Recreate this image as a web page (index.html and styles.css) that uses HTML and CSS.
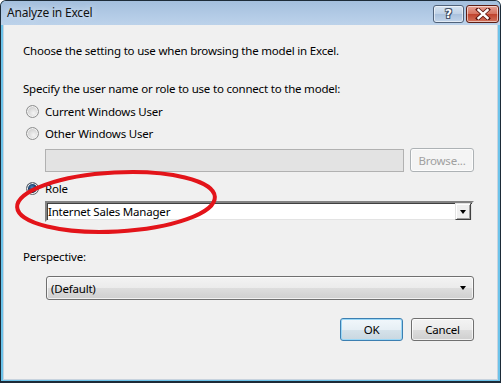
FILE: index.html
```html
<!DOCTYPE html>
<html>
  <head>
    <meta charset="UTF-8" />
    <title>Analyze in Excel</title>
    <link rel="stylesheet" href="styles.css">
  </head>
  <body>
    <div class="window">
      <div class="titlebar">
        <span class="title">Analyze in Excel</span>
        <div class="caption-buttons">
          <div class="cap help">?</div>
          <div class="cap close">
            <svg width="16" height="12" viewBox="0 0 16 12">
              <path d="M3 1.5 L13 10.5 M13 1.5 L3 10.5" stroke="#5a1410" stroke-width="4" stroke-linecap="square" />
              <path d="M3.5 2 L12.5 10 M12.5 2 L3.5 10" stroke="#fff" stroke-width="2.4" stroke-linecap="square" />
            </svg>
          </div>
        </div>
      </div>
      <div class="client">
        <p class="intro">Choose the setting to use when browsing the model in Excel.</p>
        <p class="label spec">Specify the user name or role to use to connect to the model:</p>

        <div class="radio-row first">
          <span class="radio"></span>
          <span>Current Windows User</span>
        </div>
        <div class="radio-row">
          <span class="radio"></span>
          <span>Other Windows User</span>
        </div>

        <div class="user-row">
          <div class="textbox disabled"></div>
          <div class="btn browse">Browse...</div>
        </div>

        <div class="radio-row role">
          <span class="radio checked"></span>
          <span>Role</span>
        </div>

        <div class="combo classic">
          <span class="combo-text">Internet Sales Manager</span>
          <span class="drop-btn"><span class="arrow"></span></span>
        </div>

        <p class="label perspective">Perspective:</p>
        <div class="combo modern">
          <span class="combo-text">(Default)</span>
          <span class="arrow"></span>
        </div>

        <div class="actions">
          <div class="btn default">OK</div>
          <div class="btn">Cancel</div>
        </div>

        <!-- annotation drawn over the role selector -->
        <svg class="callout" width="230" height="80" viewBox="0 0 230 80">
          <ellipse cx="115" cy="40" rx="99" ry="29.5" fill="none" stroke="#e3141a" stroke-width="4" transform="rotate(-3 115 40)" />
        </svg>
      </div>
    </div>
  </body>
</html>
```

FILE: styles.css
```css
html,
body {
  margin: 0;
  padding: 0;
  background: #fff;
}

body {
  font-family: "Noto Sans", "Open Sans", sans-serif;
  font-size: 11.5px;
  letter-spacing: -0.2px;
  color: #000;
}

.window {
  width: 501px;
  height: 383px;
  box-sizing: border-box;
  border: 1px solid #1d2b38;
  border-bottom-width: 2px;
  border-top-left-radius: 6px;
  border-top-right-radius: 6px;
  background: #6cc3ea;
  display: flex;
  flex-direction: column;
  overflow: hidden;
}

.titlebar {
  height: 24px;
  flex: none;
  display: flex;
  align-items: center;
  justify-content: space-between;
  padding: 0 1px 0 6px;
  background: linear-gradient(#a4bfdd, #b3cbe6 60%, #bcd2ea);
}

.title {
  font-size: 12px;
  color: #111;
  padding-bottom: 1px;
  text-shadow: 0 0 6px #e6eef8;
}

.caption-buttons {
  display: flex;
  gap: 2px;
  align-self: flex-start;
  margin-top: 4px;
}

.cap {
  height: 16px;
  border: 1px solid #50627a;
  border-radius: 3px;
  display: flex;
  align-items: center;
  justify-content: center;
  box-shadow: inset 0 0 0 1px rgba(255, 255, 255, 0.55);
}

.help {
  width: 29px;
  background: linear-gradient(#d6e3f1, #bfd1e6 50%, #a9c0dc 51%, #c2d5ea);
  font-family: "DejaVu Sans", sans-serif;
  font-weight: bold;
  font-size: 12px;
  color: #fff;
  text-shadow: 0 0 1px #334, 1px 1px 0 #45566c, -1px -1px 0 #45566c, 1px -1px 0 #45566c, -1px 1px 0 #45566c;
}

.close {
  width: 31px;
  border-color: #5c1d14;
  background: linear-gradient(#e6a194, #d5725f 50%, #c0422d 51%, #d2735c);
}

.client {
  flex: 1;
  position: relative;
  margin: 0 2px 1px 2px;
  border: 1px solid #c8d3de;
  border-top: none;
  background: #f0f0f0;
  padding: 0 23px 0 19px;
}

p {
  margin: 0;
  line-height: 16px;
}

.intro {
  margin-top: 18px;
}

.spec {
  margin-top: 22px;
}

.radio-row {
  display: flex;
  align-items: center;
  height: 16px;
  margin-top: 6px;
  gap: 6px;
}

.radio {
  width: 11px;
  height: 11px;
  margin-left: 3px;
  border-radius: 50%;
  border: 1px solid #8e8f8f;
  background: radial-gradient(circle at 60% 65%, #f4f4f4, #cfcfcf 70%, #bdbdbd);
  box-shadow: inset 0 0 0 1px #f3f3f3;
}

.radio.checked {
  border-color: #5e636a;
  background: radial-gradient(circle at 45% 40%, #4d86bd, #173f6c 40%, #0a2342 58%, #c9c9c9 66%, #b4b4b4);
}

.user-row {
  display: flex;
  gap: 6px;
  margin: 7px 0 0 22px;
  height: 24px;
}

.textbox {
  flex: 1;
  box-sizing: border-box;
  height: 23px;
  margin-top: 1px;
}

.textbox.disabled {
  border: 1px solid #b1b1b1;
  background: #e3e3e3;
}

.btn {
  box-sizing: border-box;
  width: 63px;
  height: 23px;
  border: 1px solid #707070;
  border-radius: 3px;
  background: linear-gradient(#f3f3f3, #ebebeb 50%, #dddddd 51%, #cfcfcf);
  box-shadow: inset 0 0 0 1px rgba(255, 255, 255, 0.7);
  display: flex;
  align-items: center;
  justify-content: center;
}

.btn.browse {
  width: 64px;
  height: 24px;
  border-color: #adb2b5;
  background: #f4f4f4;
  color: #a0a0a0;
}

.btn.default {
  border-color: #3c7fb1;
  box-shadow: inset 0 0 0 1px #9ad7f6;
  background: linear-gradient(#f1f7fb, #e6eff5 50%, #d5e2ea 51%, #c9d7e0);
}

.role {
  margin-top: 8px;
}

.combo {
  box-sizing: border-box;
  display: flex;
  align-items: center;
}

.combo.classic {
  margin: 5px 0 0 22px;
  height: 21px;
  background: #fff;
  border-style: solid;
  border-width: 2px;
  border-color: #828282 #f0f0f0 #f0f0f0 #828282;
  box-shadow: inset 1px 1px 0 #404040, inset -1px -1px 0 #e3e3e3;
}

.combo-text {
  flex: 1;
  padding-left: 1px;
  white-space: nowrap;
}

.drop-btn {
  width: 16px;
  height: 17px;
  box-sizing: border-box;
  margin-right: 1px;
  background: #f0f0f0;
  border-style: solid;
  border-width: 1px;
  border-color: #e3e3e3 #404040 #404040 #e3e3e3;
  box-shadow: inset 1px 1px 0 #fff, inset -1px -1px 0 #a0a0a0;
  display: flex;
  align-items: center;
  justify-content: center;
}

.arrow {
  width: 0;
  height: 0;
  border-left: 3.5px solid transparent;
  border-right: 3.5px solid transparent;
  border-top: 4px solid #000;
}

.perspective {
  margin-top: 27px;
}

.combo.modern {
  margin: 11px 0 0 23px;
  height: 24px;
  border: 1px solid #707070;
  border-radius: 3px;
  background: linear-gradient(#f3f3f3, #ebebeb 50%, #dddddd 51%, #cfcfcf);
  box-shadow: inset 0 0 0 1px rgba(255, 255, 255, 0.7);
  padding: 0 7px 0 3px;
}

.actions {
  display: flex;
  justify-content: flex-end;
  gap: 8px;
  margin-top: 18px;
}

.callout {
  position: absolute;
  left: -3px;
  top: 137px;
}
```
